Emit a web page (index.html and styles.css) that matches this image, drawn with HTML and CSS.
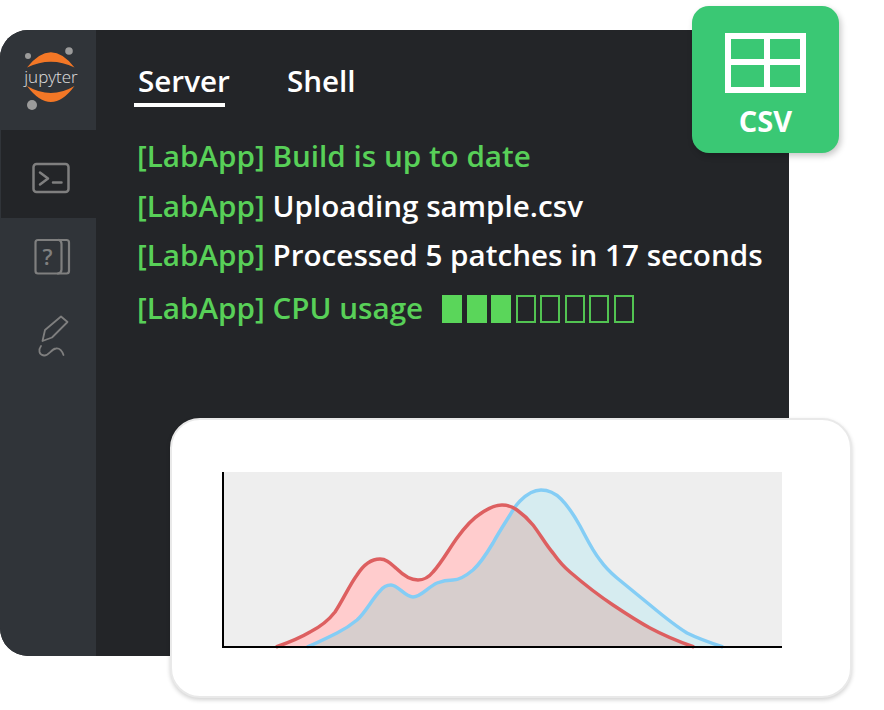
FILE: index.html
```html
<!DOCTYPE html>
<html lang="en">
<head>
<meta charset="utf-8">
<title>Jupyter</title>
<link rel="stylesheet" href="styles.css">
</head>
<body>
<div class="stage">
  <div class="window">
    <aside class="sidebar">
      <div class="logo">
        <svg class="logo-svg" width="96" height="100" viewBox="0 30 96 100">
          <circle class="logo-dot" cx="28" cy="56" r="3"/>
          <circle class="logo-dot" cx="69" cy="51" r="3.800"/>
          <circle class="logo-dot" cx="32" cy="105" r="5"/>
          <path class="logo-arc" d="M27 67.500Q51 37 74.500 67.500Q51 56 27 67.500Z"/>
          <path class="logo-arc" d="M27 86Q51 118 74.500 86Q51 100 27 86Z"/>
          <text class="logo-text" x="51" y="82.500" text-anchor="middle">jupyter</text>
        </svg>
      </div>
      <div class="nav-item nav-active">
        <svg class="icon icon-terminal" width="96" height="50" viewBox="0 153 96 50">
          <rect x="33.500" y="164" width="35" height="28" rx="3"/>
          <path d="M40 172.500L48 178.500L40 184.500M53 182.500H61.500"/>
        </svg>
      </div>
      <div class="nav-item">
        <svg class="icon" width="96" height="50" viewBox="0 233 96 50">
          <path d="M38 240H66.500Q69 240 69 242.500V271Q69 273.500 66.500 273.500H38Q35.500 273.500 35.500 271V242.500Q35.500 240 38 240Z"/>
          <path d="M59 240Q61.500 241 61.500 244V269.500Q61.500 273 58 273.500"/>
          <text class="help-mark" x="47.500" y="264.500" text-anchor="middle">?</text>
        </svg>
      </div>
      <div class="nav-item">
        <svg class="icon icon-pen" width="96" height="50" viewBox="0 313 96 50">
          <path d="M42.500 341L45 330L61 316.500L67.500 322L52 337.500Z"/>
          <path d="M41 346C38 350 39 355 44 355.500C49 356 51 349 56 348.500C59 348 62 351 63.500 355"/>
        </svg>
      </div>
    </aside>
    <main class="terminal">
      <nav class="tabs">
        <span class="tab tab-active">Server</span>
        <span class="tab">Shell</span>
      </nav>
      <div class="log">
        <p class="line green">[LabApp] Build is up to date</p>
        <p class="line"><span class="green">[LabApp]</span> Uploading sample.csv</p>
        <p class="line"><span class="green">[LabApp]</span> Processed 5 patches in 17 seconds</p>
        <p class="line line-cpu green">[LabApp] CPU usage
          <span class="meter">
            <i class="cell full"></i><i class="cell full"></i><i class="cell full"></i><i class="cell"></i><i class="cell"></i><i class="cell"></i><i class="cell"></i><i class="cell"></i>
          </span>
        </p>
      </div>
    </main>
  </div>

  <div class="csv-badge">
    <svg class="csv-icon" width="81" height="60" viewBox="0 0 81 60">
      <path d="M3 3H78V57H3ZM3 29H78M42 3V57"/>
    </svg>
    <span class="csv-label">CSV</span>
  </div>

  <div class="chart-card">
    <svg class="chart" width="562" height="178" viewBox="222 471 562 178">
      <defs>
        <clipPath id="red-area">
          <path d="M276 647C290 642 300 638 310 632C320 627 328 621 335 612C343 600 349 586 357 575C364 564 371 559 380 559C387 559 391 564 397 569C403 575 410 580 418 580C425 580 429 577 433 572C442 562 449 549 457 538C465 527 472 519 480 514C487 509 494 505 502 505C509 505 513 507 517 510C524 515 529 520 533 525C540 534 546 545 553 553C558 560 564 567 570 572C584 584 598 595 613 605C625 613 637 621 650 628C663 635 677 641 694 647Z"/>
        </clipPath>
      </defs>
      <rect class="plot-bg" x="222" y="472" width="560" height="175"/>
      <path class="fill-red" d="M276 647C290 642 300 638 310 632C320 627 328 621 335 612C343 600 349 586 357 575C364 564 371 559 380 559C387 559 391 564 397 569C403 575 410 580 418 580C425 580 429 577 433 572C442 562 449 549 457 538C465 527 472 519 480 514C487 509 494 505 502 505C509 505 513 507 517 510C524 515 529 520 533 525C540 534 546 545 553 553C558 560 564 567 570 572C584 584 598 595 613 605C625 613 637 621 650 628C663 635 677 641 694 647Z"/>
      <path class="fill-blue" d="M307 647C317 643 327 638 337 633C345 629 351 625 357 620C366 612 372 599 380 591C383 587 387 585 391 585C398 585 405 597 413 597C421 597 428 587 437 583C442 581 447 580 453 580C460 580 467 575 473 570C481 563 487 553 493 543C499 532 505 523 510 515C513 510 515 506 520 501C526 495 533 490 541 490C549 490 555 493 561 499C569 507 575 517 580 526C586 537 592 550 600 560C605 567 611 573 617 578C628 587 639 596 650 605C662 615 674 625 687 633C699 639 711 643 723 647Z"/>
      <path class="fill-both" clip-path="url(#red-area)" d="M307 647C317 643 327 638 337 633C345 629 351 625 357 620C366 612 372 599 380 591C383 587 387 585 391 585C398 585 405 597 413 597C421 597 428 587 437 583C442 581 447 580 453 580C460 580 467 575 473 570C481 563 487 553 493 543C499 532 505 523 510 515C513 510 515 506 520 501C526 495 533 490 541 490C549 490 555 493 561 499C569 507 575 517 580 526C586 537 592 550 600 560C605 567 611 573 617 578C628 587 639 596 650 605C662 615 674 625 687 633C699 639 711 643 723 647Z"/>
      <path class="line-blue" d="M307 647C317 643 327 638 337 633C345 629 351 625 357 620C366 612 372 599 380 591C383 587 387 585 391 585C398 585 405 597 413 597C421 597 428 587 437 583C442 581 447 580 453 580C460 580 467 575 473 570C481 563 487 553 493 543C499 532 505 523 510 515C513 510 515 506 520 501C526 495 533 490 541 490C549 490 555 493 561 499C569 507 575 517 580 526C586 537 592 550 600 560C605 567 611 573 617 578C628 587 639 596 650 605C662 615 674 625 687 633C699 639 711 643 723 647"/>
      <path class="line-red" d="M276 647C290 642 300 638 310 632C320 627 328 621 335 612C343 600 349 586 357 575C364 564 371 559 380 559C387 559 391 564 397 569C403 575 410 580 418 580C425 580 429 577 433 572C442 562 449 549 457 538C465 527 472 519 480 514C487 509 494 505 502 505C509 505 513 507 517 510C524 515 529 520 533 525C540 534 546 545 553 553C558 560 564 567 570 572C584 584 598 595 613 605C625 613 637 621 650 628C663 635 677 641 694 647"/>
      <path class="axis" d="M223 472V647H782"/>
    </svg>
  </div>
</div>
</body>
</html>
```
FILE: styles.css
```css
* { box-sizing: border-box; }
html, body { margin: 0; height: 100%; background: #fff; overflow: hidden; }
body { font-family: "Open Sans", "Noto Sans", sans-serif; }

.stage { position: relative; width: 884px; height: 710px; padding-top: 30px; }

.window {
  display: flex;
  width: 789px;
  height: 626px;
  border-radius: 28px 0 0 28px;
  overflow: hidden;
  background: #232528;
}

.sidebar { flex: 0 0 96px; background: #303439; display: flex; flex-direction: column; }
.logo { height: 100px; }
.logo-svg { display: block; }
.logo-dot { fill: #9b9b9b; }
.logo-arc { fill: #f37726; }
.logo-text { font-family: "Open Sans", sans-serif; font-size: 17px; font-weight: 300; fill: #e0e0e0; }

.nav-item { height: 80px; display: flex; align-items: center; }
.nav-active { height: 88px; padding-top: 8px; margin-left: 1px; background: #232528; }
.nav-active .icon { margin-left: -1px; }
.icon { display: block; fill: none; stroke: #7f7f7f; stroke-width: 2.200; stroke-linecap: round; stroke-linejoin: round; }
.icon-terminal { stroke-width: 2.500; }
.icon-pen { stroke-width: 1.800; }
.help-mark { font-family: "Open Sans", sans-serif; font-size: 22px; font-weight: 600; fill: #7f7f7f; stroke: none; }

.terminal { flex: 1; padding: 0 0 0 41px; color: #fff; font-size: 29.650px; font-weight: 600; }
.tabs { display: flex; gap: 57px; padding: 31px 0 0 1px; height: 102px; line-height: 40px; }
.tab { position: relative; height: 40px; }
.tab-active::after { content: ""; position: absolute; left: -4px; top: 42px; width: 91px; height: 4px; background: #fff; }

.log { display: flex; flex-direction: column; }
.line { margin: 0; height: 49.500px; line-height: 47px; white-space: nowrap; }
.line-cpu { display: flex; align-items: center; height: 54px; line-height: 48px; }
.green { color: #58d058; }

.meter { display: flex; gap: 4.500px; margin: 2px 0 0 19px; }
.cell { display: block; width: 20px; height: 28px; border: 2px solid #52c452; }
.cell.full { background: #5ad65a; border-color: #5ad65a; }

.csv-badge {
  position: absolute;
  left: 692px;
  top: 6px;
  width: 147px;
  height: 147px;
  border-radius: 17px;
  background: #3ac874;
  box-shadow: 2px 3px 6px rgba(0, 0, 0, 0.22);
  display: flex;
  flex-direction: column;
  align-items: center;
  padding-top: 27px;
}
.csv-icon { display: block; fill: none; stroke: #fff; stroke-width: 6; }
.csv-label { color: #fff; font-weight: 700; font-size: 29px; line-height: 38px; margin-top: 9px; }

.chart-card {
  position: absolute;
  left: 170px;
  top: 418px;
  width: 682px;
  height: 280px;
  padding: 51px 0 0 50px;
  background: #fff;
  border: 2px solid #e9e9e9;
  border-radius: 30px;
  box-shadow: 0 2px 4px rgba(0, 0, 0, 0.18);
}
.chart { display: block; }
.plot-bg { fill: #eeeeee; }
.fill-red { fill: #ffcccd; }
.fill-blue { fill: #d6ecf0; }
.fill-both { fill: #d7cecd; }
.line-red, .line-blue { fill: none; stroke-width: 3.500; }
.line-red { stroke: #dd5f60; }
.line-blue { stroke: #84cdf5; }
.axis { fill: none; stroke: #000; stroke-width: 2; }
```
